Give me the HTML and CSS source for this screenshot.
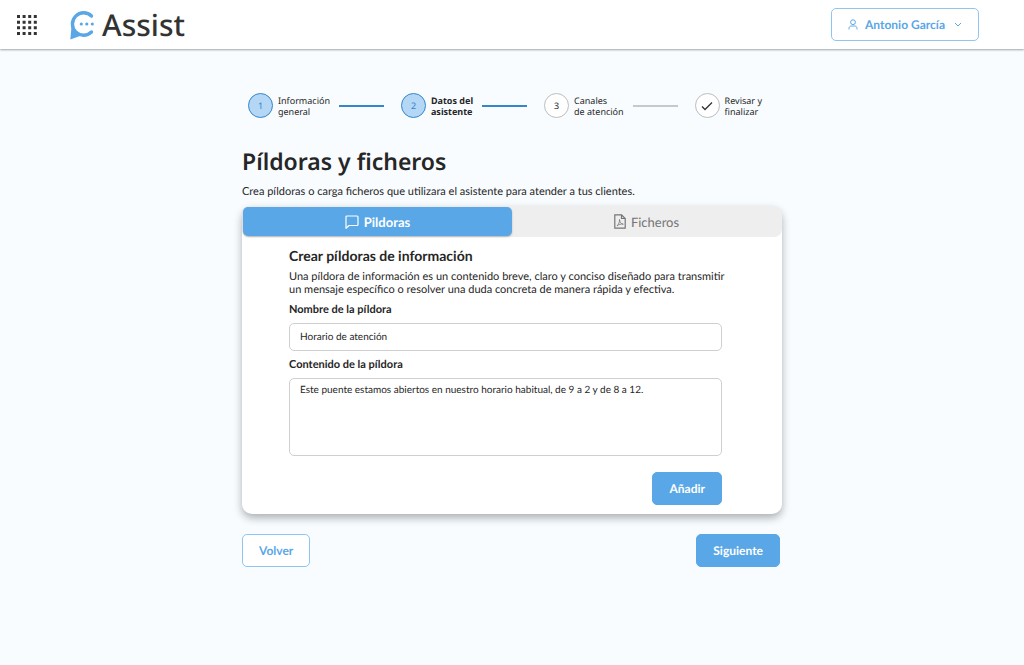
FILE: index.html
```html
<!DOCTYPE html>
<html lang="es">

<head>
  <meta charset="UTF-8">
  <meta name="viewport" content="width=device-width, initial-scale=1.0">
  <title>Assist - Píldoras y ficheros</title>
  <link rel="stylesheet" href="styles.css">
</head>

<body>

  <header class="topbar">
    <button type="button" class="apps" aria-label="Aplicaciones">
      <svg width="20" height="20" viewBox="0 0 20 20" stroke="#333" stroke-width="3" stroke-dasharray="3 2.6">
        <path d="M0 1.6h20M0 7.2h20M0 12.8h20M0 18.4h20" />
      </svg>
    </button>
    <a href="#" class="logo">
      <svg width="26" height="30" viewBox="0 0 26 30">
        <path d="M21.5 6A11.2 11.2 0 1 0 21.5 22" fill="none" stroke="#59a7e6" stroke-width="3.4" stroke-linecap="round" />
        <path d="M1.5 17L0.3 29.5L10 26Z" fill="#59a7e6" />
        <g fill="#59a7e6">
          <circle cx="11.3" cy="14" r="1.6" />
          <circle cx="16.8" cy="14" r="1.6" />
          <circle cx="22.3" cy="14" r="1.6" />
        </g>
      </svg>
      <span>Assist</span>
    </a>
    <button type="button" class="btn btn-outline user">
      <svg width="10" height="11" viewBox="0 0 10 11" fill="none" stroke="currentColor">
        <circle cx="5" cy="3.2" r="2.4" />
        <path d="M1 10.5V9.5C1 7.8 2 7 3.5 7h3C8 7 9 7.8 9 9.5v1" />
      </svg>
      Antonio García
      <svg width="8" height="6" viewBox="0 0 8 6" fill="none" stroke="currentColor">
        <path d="M1 1l3 3l3-3" />
      </svg>
    </button>
  </header>

  <main class="content">
    <ol class="steps">
      <li class="step done">
        <span class="circle">1</span>
        <span>Información<br>general</span>
      </li>
      <li class="step done current">
        <span class="circle">2</span>
        <span>Datos del<br>asistente</span>
      </li>
      <li class="step">
        <span class="circle">3</span>
        <span>Canales<br>de atención</span>
      </li>
      <li class="step">
        <span class="circle">
          <svg width="12" height="10" viewBox="0 0 12 10" fill="none" stroke="#333" stroke-width="1.3">
            <path d="M1 5.5l3 3L11 1.5" />
          </svg>
        </span>
        <span>Revisar y<br>finalizar</span>
      </li>
    </ol>

    <h1>Píldoras y ficheros</h1>
    <p class="intro">Crea píldoras o carga ficheros que utilizara el asistente para atender a tus clientes.</p>

    <section class="card">
      <div class="tabs" role="tablist">
        <button type="button" class="tab active" role="tab" aria-selected="true">
          <svg width="14" height="14" viewBox="0 0 14 14" fill="none" stroke="currentColor" stroke-width="1.2" stroke-linejoin="round">
            <path d="M2 1h10a1 1 0 0 1 1 1v7.5a1 1 0 0 1-1 1H4L1 13.3V2a1 1 0 0 1 1-1z" />
          </svg>
          Pildoras
        </button>
        <button type="button" class="tab" role="tab" aria-selected="false">
          <svg width="12" height="15" viewBox="0 0 12 15" fill="none" stroke="currentColor" stroke-width="1.2">
            <path d="M0.8 0.8H7.5L11.2 4.5V14.2H0.8Z" />
            <path d="M7.5 0.8V4.5H11.2" />
            <path d="M5.5 5.5C6 8.5 7 9.8 9.3 10.2C6.5 9.8 4.5 10.5 3 12C4.8 10 5.7 8 5.5 5.5Z" stroke-width="0.8" />
          </svg>
          Ficheros
        </button>
      </div>

      <form class="pill-form">
        <h2>Crear píldoras de información</h2>
        <p>Una píldora de información es un contenido breve, claro y conciso diseñado para transmitir un mensaje específico o resolver una duda concreta de manera rápida y efectiva.</p>

        <label for="pill-name">Nombre de la píldora</label>
        <input type="text" id="pill-name" value="Horario de atención">

        <label for="pill-content">Contenido de la píldora</label>
        <textarea id="pill-content">Este puente estamos abiertos en nuestro horario habitual, de 9 a 2 y de 8 a 12.</textarea>

        <button type="button" class="btn btn-primary">Añadir</button>
      </form>
    </section>

    <nav class="actions">
      <button type="button" class="btn btn-outline">Volver</button>
      <button type="button" class="btn btn-primary">Siguiente</button>
    </nav>
  </main>

</body>

</html>
```
FILE: styles.css
```css
:root {
  --primary: #59a7e6;
  --primary-dark: #3586ca;
  --primary-light: #b3d7f5;
  --text: #262626;
  --border: #cfcfcf;
  --heading: "Noto Sans", sans-serif;
}

* {
  margin: 0;
  padding: 0;
  box-sizing: border-box;
}

body {
  min-height: 100vh;
  background: #f8fcff;
  color: var(--text);
  font-family: Lato, sans-serif;
  font-size: 11px;
  text-rendering: geometricPrecision;
}

button,
input,
textarea {
  font: inherit;
  color: inherit;
  text-rendering: inherit;
}

button {
  cursor: pointer;
}

.topbar {
  display: flex;
  align-items: center;
  height: 49px;
  padding: 0 45px 0 17px;
  background: #fff;
  box-shadow: 0 1px 2px rgba(0, 0, 0, 0.35);
}

.apps {
  display: flex;
  border: none;
  background: none;
}

.logo {
  display: flex;
  align-items: center;
  gap: 6px;
  margin-left: 33px;
  color: #333;
  font-family: var(--heading);
  font-size: 30px;
  font-weight: 500;
  line-height: 46px;
  text-decoration: none;
}

.btn {
  height: 33px;
  padding: 0 16px;
  border: 1px solid var(--primary);
  border-radius: 5px;
  font-size: 12px;
  font-weight: 700;
}

.btn-outline {
  background: #fff;
  border-color: #8fc5f2;
  color: var(--primary);
}

.btn-primary {
  background: var(--primary);
  color: #fff;
}

.user {
  display: flex;
  align-items: center;
  gap: 7px;
  margin-left: auto;
}

.user svg:last-child {
  margin-left: 2px;
}

.content {
  max-width: 540px;
  margin: 0 auto;
  padding: 44px 0;
}

.steps {
  display: flex;
  padding: 0 20px 0 6px;
  list-style: none;
  font-family: var(--heading);
  font-size: 9px;
  line-height: 11px;
}

.step {
  display: flex;
  flex: 1 0 auto;
  align-items: center;
  gap: 5px;
}

.step:last-child {
  flex: none;
}

.step::after {
  flex: 1;
  height: 2px;
  margin: 0 17px 0 4px;
  background: #c8c8c8;
}

.step:not(:last-child)::after {
  content: "";
}

.step.done::after {
  background: var(--primary-dark);
}

.circle {
  display: flex;
  align-items: center;
  justify-content: center;
  width: 25px;
  height: 25px;
  border: 1px solid #bdbdbd;
  border-radius: 50%;
  background: #fff;
}

.done .circle {
  border-color: var(--primary-dark);
  background: var(--primary-light);
  color: var(--primary-dark);
  font-weight: 400;
}

.current {
  font-weight: 700;
}

h1 {
  margin-top: 27px;
  font-family: var(--heading);
  font-size: 23px;
  font-weight: 600;
  line-height: 32px;
}

.intro {
  margin-top: 7px;
  line-height: 16px;
}

.card {
  margin-top: 6px;
  border-radius: 10px;
  background: #fff;
  box-shadow: 0 4px 8px rgba(0, 0, 0, 0.3);
}

.tabs {
  display: flex;
  padding: 1px;
  border-radius: 8px;
  background: #eee;
}

.tab {
  display: flex;
  flex: 1;
  align-items: center;
  justify-content: center;
  gap: 5px;
  height: 29px;
  border: none;
  border-radius: 5px;
  background: none;
  color: #757575;
  font-size: 13px;
}

.tab.active {
  background: var(--primary);
  box-shadow: 0 1px 2px rgba(0, 0, 0, 0.25);
  color: #fff;
  font-weight: 700;
}

.pill-form {
  display: flex;
  flex-direction: column;
  padding: 10px 60px 9px 47px;
}

h2 {
  font-size: 14px;
  font-weight: 700;
  line-height: 18px;
}

.pill-form p {
  margin-top: 5px;
  margin-right: -10px;
  line-height: 13px;
}

.pill-form label {
  margin-top: 6px;
  font-size: 11px;
  font-weight: 700;
  line-height: 16px;
}

.pill-form input,
.pill-form textarea {
  margin-top: 5px;
  padding: 0 10px;
  border: 1px solid var(--border);
  border-radius: 5px;
  background: #fff;
  font-size: 10px;
}

.pill-form input {
  height: 28px;
}

.pill-form textarea {
  height: 78px;
  padding: 5px 10px;
  line-height: 13px;
  resize: none;
}

.pill-form .btn {
  align-self: flex-end;
  margin-top: 16px;
}

.actions {
  display: flex;
  justify-content: space-between;
  margin-top: 20px;
  padding-right: 2px;
}
```
